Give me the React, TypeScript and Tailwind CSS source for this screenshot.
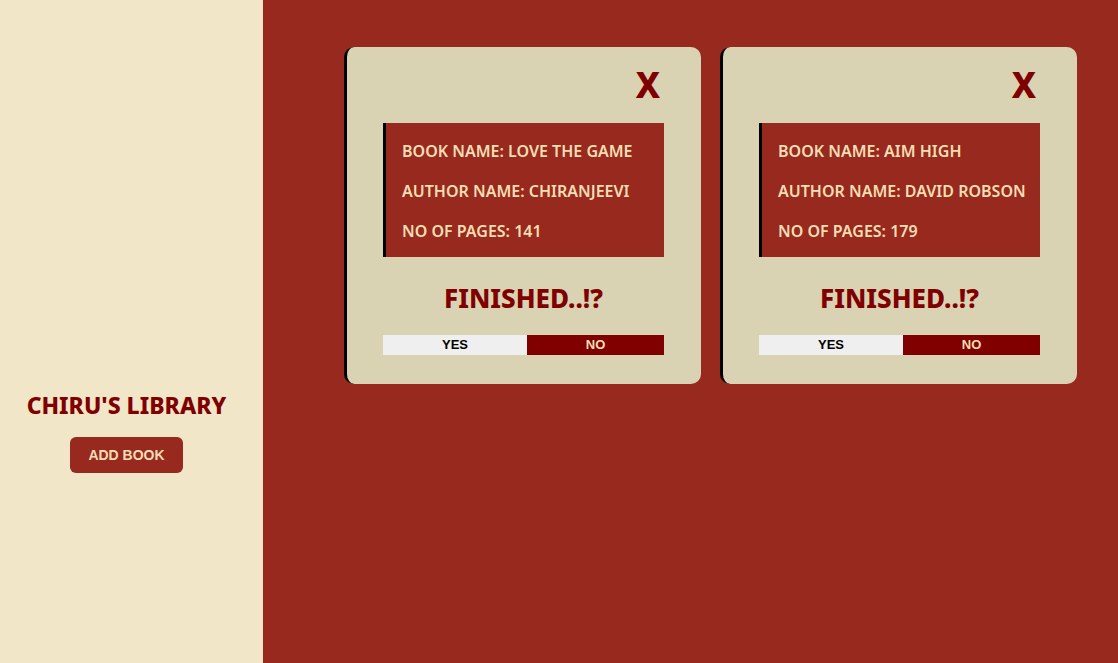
import React from 'react';

type Book = {
  name: string;
  author: string;
  pages: number;
};

const books: Book[] = [
  { name: 'LOVE THE GAME', author: 'CHIRANJEEVI', pages: 141 },
  { name: 'AIM HIGH', author: 'DAVID ROBSON', pages: 179 },
];

const BookCard = ({ book }: { book: Book }) => {
  return (
    <div className="w-[357px] rounded-[10px] border-l-[3px] border-black bg-[#d9d3b3] pl-[36px] pr-[37px] pt-[16px] pb-[29px]">
      {/* close */}
      <div className="flex justify-end pr-[4px]">
        <button className="text-[35px] font-extrabold leading-[44px] text-[#800000]">X</button>
      </div>

      {/* details */}
      <div className="mt-[16px] border-l-[3px] border-black bg-[#98291e] pt-[8px] pb-[6px] pl-[16px] text-[16px] font-semibold leading-[40px] text-[#f5deb3]">
        <p>BOOK NAME: {book.name}</p>
        <p>AUTHOR NAME: {book.author}</p>
        <p>NO OF PAGES: {book.pages}</p>
      </div>

      <h2 className="mt-[24px] text-center text-[26px] font-extrabold leading-[34px] text-[#800000]">
        FINISHED..!?
      </h2>

      <div className="mt-[20px] flex font-['Liberation_Sans',sans-serif] text-[13px] font-bold leading-[20px]">
        <button className="w-[144px] bg-[#efefef] text-black">YES</button>
        <button className="flex-1 bg-[#800000] text-[#f5deb3]">NO</button>
      </div>
    </div>
  );
};

const App = () => {
  return (
    <div className="flex h-[663px] w-full font-['Noto_Sans',sans-serif]">
      {/* Sidebar */}
      <aside className="flex w-[263px] shrink-0 flex-col items-center bg-[#f1e7c8] pt-[389px] pr-[10px]">
        <h1 className="text-[23px] font-extrabold leading-[32px] text-[#800000]">CHIRU'S LIBRARY</h1>
        <button className="mt-[16px] h-[36px] rounded-[6px] bg-[#98291e] px-[18px] font-['Liberation_Sans',sans-serif] text-[14px] font-extrabold text-[#f5deb3]">
          ADD BOOK
        </button>
      </aside>

      {/* Main Content */}
      <main className="flex flex-1 items-start gap-[19px] bg-[#98291e] pt-[47px] pl-[81px]">
        {books.map((book) => (
          <BookCard key={book.name} book={book} />
        ))}
      </main>
    </div>
  );
};

export default App;
